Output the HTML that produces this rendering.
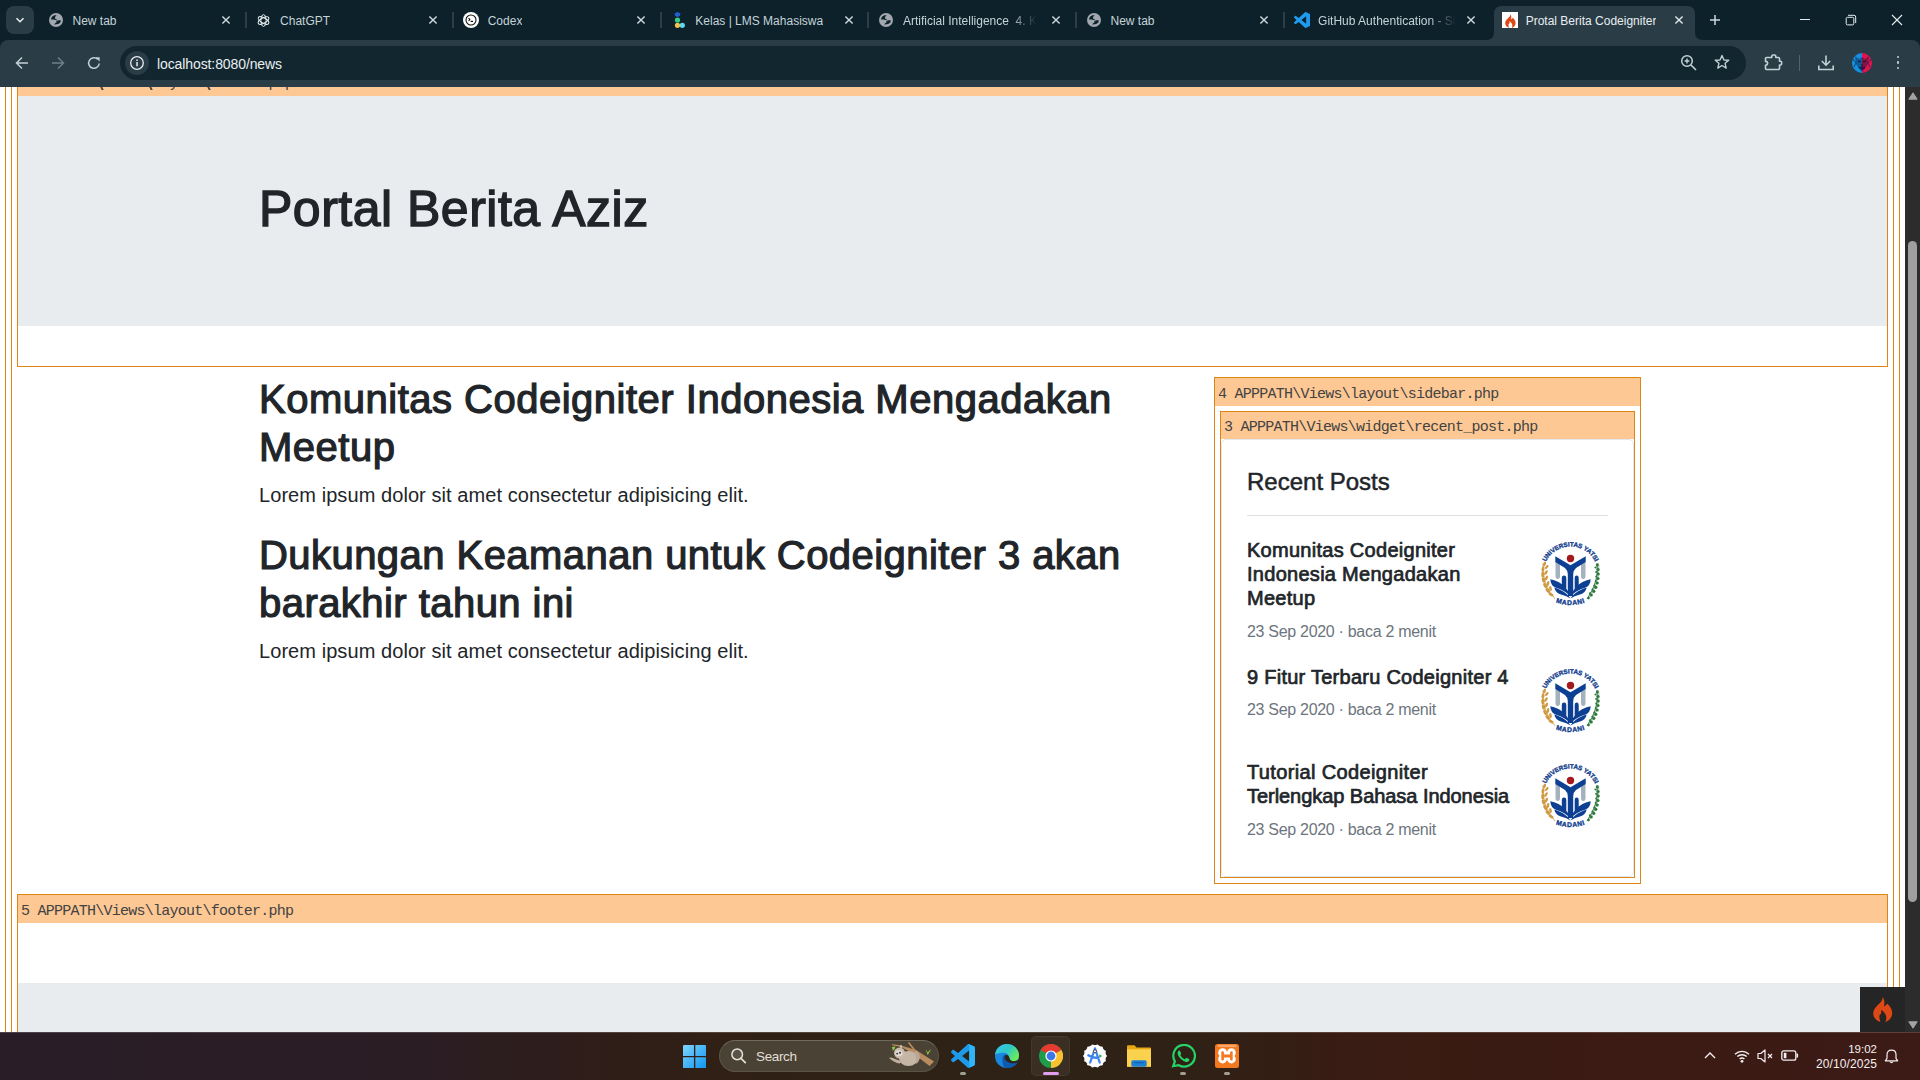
<!DOCTYPE html>
<html><head><meta charset="utf-8">
<style>
*{box-sizing:border-box;margin:0;padding:0}
html,body{width:1920px;height:1080px;overflow:hidden;background:#0c212a;font-family:"Liberation Sans",sans-serif}
.abs{position:absolute}
#tabstrip{position:absolute;left:0;top:0;width:1920px;height:40px;background:#0c212a}
#toolbar{position:absolute;left:0;top:40px;width:1920px;height:47px;background:#2a3c46;border-radius:8px 8px 0 0}
.tab{position:absolute;top:0;height:40px;width:208px}
.tab .ttl{position:absolute;top:13px;font-size:12.5px;color:#cfd8dc;white-space:nowrap;overflow:hidden}
.tab .cls{position:absolute;top:13px;width:14px;height:14px}
.sep{position:absolute;top:12px;width:1px;height:17px;background:#465761}
#page{position:absolute;left:0;top:87px;width:1905px;height:945px;background:#fff;overflow:hidden}
#sbar{position:absolute;left:1905px;top:87px;width:15px;height:945px;background:#2c2c2c}
#taskbar{position:absolute;left:0;top:1032px;width:1920px;height:48px;background:linear-gradient(90deg,#291d27 0%,#2b1d24 22%,#2f1e19 31%,#302015 37%,#2e2217 50%,#2f2116 62%,#391c13 70%,#3b1b14 85%,#3c1a16 100%)}
.vb{position:absolute;border:1px solid #dd8615}
.vp{position:absolute;background:#fdc894;color:#434343;font-family:"Liberation Mono",monospace;font-size:15px;letter-spacing:-0.75px;white-space:nowrap}
.h{color:#212529;position:absolute;white-space:nowrap}
.m{font-size:16px;line-height:20px;letter-spacing:-0.3px;color:#6c757d}
</style></head><body>

<div id="tabstrip">
<div class="abs" style="left:6px;top:6px;width:28px;height:28px;border-radius:8px;background:#2a3c46"></div>
<svg class="abs" style="left:14px;top:14px" width="12" height="12" viewBox="0 0 12 12"><path d="M2.5 4.2 L6 7.7 L9.5 4.2" stroke="#e6ecef" stroke-width="1.6" fill="none"/></svg>
<svg class="abs" style="left:1486px;top:6px" width="218" height="34" viewBox="0 0 218 34"><path d="M0 34 Q8 34 8 26 L8 8 Q8 0 16 0 L201 0 Q209 0 209 8 L209 26 Q209 34 217 34 Z" fill="#2a3c46"/></svg>
<svg class="abs" style="left:48.0px;top:12px" width="16" height="16" viewBox="0 0 16 16"><circle cx="8" cy="8" r="7" fill="#a0a7ae"/><path d="M3 7.4C3.2 6.2 3.6 5.4 4.1 4.7C4.7 4 5.3 3.6 6 3.4C6.9 3.1 7.8 3.1 8.7 3.2C8.1 3.6 7.5 4.1 7.3 4.7C7 5.2 6.8 5.6 6.9 5.8C7 6.2 7.1 6.5 7.3 6.7C7.8 7 8.1 7.1 8.4 7.3C8.8 7.6 9 8 9.1 8.4C8.3 8.1 7.5 7.9 6.7 7.8C6 7.7 5.4 7.6 4.7 7.6C4.1 7.5 3.5 7.5 3 7.4Z" fill="#0c212a"/><path d="M12.8 8.4C12.7 9.2 12.5 9.9 12.1 10.6C11.5 11.3 10.8 11.8 9.9 12.1C8.8 12.4 7.6 12.5 6.5 12.4C6.5 12.1 6.6 11.9 6.7 11.7C7.2 11.2 7.8 10.9 8.4 10.6C8.6 10.1 8.5 9.6 8.4 9.1C9 8.7 9.4 8.5 10 8.4C10.9 8.3 11.9 8.3 12.8 8.4Z" fill="#0c212a"/></svg>
<div class="abs" style="left:72.5px;top:13px;font-size:12px;line-height:16px;letter-spacing:0px;color:#c5d3d9;white-space:nowrap;overflow:hidden;">New tab</div>
<svg class="abs" style="left:219.75px;top:14px" width="12" height="12" viewBox="0 0 12 12"><path d="M2.4 2.4L9.6 9.6M9.6 2.4L2.4 9.6" stroke="#cfdade" stroke-width="1.4"/></svg>
<svg class="abs" style="left:256.1px;top:12.5px" width="15" height="15" viewBox="0 0 24 24"><g fill="none" stroke="#e8eef0" stroke-width="1.6"><ellipse cx="12" cy="12" rx="9.5" ry="4.2" transform="rotate(30 12 12)"/><ellipse cx="12" cy="12" rx="9.5" ry="4.2" transform="rotate(90 12 12)"/><ellipse cx="12" cy="12" rx="9.5" ry="4.2" transform="rotate(150 12 12)"/></g></svg>
<div class="abs" style="left:280.1px;top:13px;font-size:12px;line-height:16px;letter-spacing:0px;color:#c5d3d9;white-space:nowrap;overflow:hidden;">ChatGPT</div>
<svg class="abs" style="left:427.35px;top:14px" width="12" height="12" viewBox="0 0 12 12"><path d="M2.4 2.4L9.6 9.6M9.6 2.4L2.4 9.6" stroke="#cfdade" stroke-width="1.4"/></svg>
<svg class="abs" style="left:463.2px;top:12px" width="16" height="16" viewBox="0 0 16 16"><circle cx="8" cy="8" r="8" fill="#fff"/><circle cx="8" cy="8" r="5" fill="none" stroke="#111" stroke-width="1.1"/><path d="M5.6 6.2 L6.8 7.6 L5.6 9" stroke="#111" stroke-width="1.1" fill="none"/><path d="M7.6 9.4 H10" stroke="#111" stroke-width="1.2"/></svg>
<div class="abs" style="left:487.7px;top:13px;font-size:12px;line-height:16px;letter-spacing:0px;color:#c5d3d9;white-space:nowrap;overflow:hidden;">Codex</div>
<svg class="abs" style="left:634.95px;top:14px" width="12" height="12" viewBox="0 0 12 12"><path d="M2.4 2.4L9.6 9.6M9.6 2.4L2.4 9.6" stroke="#cfdade" stroke-width="1.4"/></svg>
<svg class="abs" style="left:672.8px;top:11px" width="14" height="18" viewBox="0 0 14 18"><path d="M1.5 2.5 L4.5 1 L7.5 2.5 L6.8 5 Q4.5 6.5 2.2 5 Z" fill="#1f5fd6"/><circle cx="4.5" cy="9" r="2.6" fill="#2fcf86"/><circle cx="4.5" cy="14.3" r="2.6" fill="#f7c04a"/><circle cx="9.3" cy="14.3" r="2.6" fill="#5fd8f0"/></svg>
<div class="abs" style="left:695.3px;top:13px;font-size:12px;line-height:16px;letter-spacing:0px;color:#c5d3d9;white-space:nowrap;overflow:hidden;">Kelas | LMS Mahasiswa</div>
<svg class="abs" style="left:842.55px;top:14px" width="12" height="12" viewBox="0 0 12 12"><path d="M2.4 2.4L9.6 9.6M9.6 2.4L2.4 9.6" stroke="#cfdade" stroke-width="1.4"/></svg>
<svg class="abs" style="left:878.4px;top:12px" width="16" height="16" viewBox="0 0 16 16"><circle cx="8" cy="8" r="7" fill="#a0a7ae"/><path d="M3 7.4C3.2 6.2 3.6 5.4 4.1 4.7C4.7 4 5.3 3.6 6 3.4C6.9 3.1 7.8 3.1 8.7 3.2C8.1 3.6 7.5 4.1 7.3 4.7C7 5.2 6.8 5.6 6.9 5.8C7 6.2 7.1 6.5 7.3 6.7C7.8 7 8.1 7.1 8.4 7.3C8.8 7.6 9 8 9.1 8.4C8.3 8.1 7.5 7.9 6.7 7.8C6 7.7 5.4 7.6 4.7 7.6C4.1 7.5 3.5 7.5 3 7.4Z" fill="#0c212a"/><path d="M12.8 8.4C12.7 9.2 12.5 9.9 12.1 10.6C11.5 11.3 10.8 11.8 9.9 12.1C8.8 12.4 7.6 12.5 6.5 12.4C6.5 12.1 6.6 11.9 6.7 11.7C7.2 11.2 7.8 10.9 8.4 10.6C8.6 10.1 8.5 9.6 8.4 9.1C9 8.7 9.4 8.5 10 8.4C10.9 8.3 11.9 8.3 12.8 8.4Z" fill="#0c212a"/></svg>
<div class="abs" style="left:902.9px;top:13px;font-size:12px;line-height:16px;letter-spacing:0px;color:#c5d3d9;white-space:nowrap;overflow:hidden;-webkit-mask-image:linear-gradient(90deg,#000 80%,transparent 100%);width:134px;">Artificial Intelligence&nbsp; 4. Knowledge</div>
<svg class="abs" style="left:1050.15px;top:14px" width="12" height="12" viewBox="0 0 12 12"><path d="M2.4 2.4L9.6 9.6M9.6 2.4L2.4 9.6" stroke="#cfdade" stroke-width="1.4"/></svg>
<svg class="abs" style="left:1086.0px;top:12px" width="16" height="16" viewBox="0 0 16 16"><circle cx="8" cy="8" r="7" fill="#a0a7ae"/><path d="M3 7.4C3.2 6.2 3.6 5.4 4.1 4.7C4.7 4 5.3 3.6 6 3.4C6.9 3.1 7.8 3.1 8.7 3.2C8.1 3.6 7.5 4.1 7.3 4.7C7 5.2 6.8 5.6 6.9 5.8C7 6.2 7.1 6.5 7.3 6.7C7.8 7 8.1 7.1 8.4 7.3C8.8 7.6 9 8 9.1 8.4C8.3 8.1 7.5 7.9 6.7 7.8C6 7.7 5.4 7.6 4.7 7.6C4.1 7.5 3.5 7.5 3 7.4Z" fill="#0c212a"/><path d="M12.8 8.4C12.7 9.2 12.5 9.9 12.1 10.6C11.5 11.3 10.8 11.8 9.9 12.1C8.8 12.4 7.6 12.5 6.5 12.4C6.5 12.1 6.6 11.9 6.7 11.7C7.2 11.2 7.8 10.9 8.4 10.6C8.6 10.1 8.5 9.6 8.4 9.1C9 8.7 9.4 8.5 10 8.4C10.9 8.3 11.9 8.3 12.8 8.4Z" fill="#0c212a"/></svg>
<div class="abs" style="left:1110.5px;top:13px;font-size:12px;line-height:16px;letter-spacing:0px;color:#c5d3d9;white-space:nowrap;overflow:hidden;">New tab</div>
<svg class="abs" style="left:1257.75px;top:14px" width="12" height="12" viewBox="0 0 12 12"><path d="M2.4 2.4L9.6 9.6M9.6 2.4L2.4 9.6" stroke="#cfdade" stroke-width="1.4"/></svg>
<svg class="abs" style="left:1293.6px;top:12px" width="16" height="16" viewBox="0 0 100 100"><path d="M70.9 99.3C72.5 99.9 74.3 99.9 75.9 99.1L96.5 89.2C98.6 88.2 100 86 100 83.6V16.4C100 14 98.6 11.8 96.5 10.8L75.9 0.9C73.8-0.1 71.3 0.1 69.5 1.4C69.3 1.6 69 1.8 68.8 2.1L29.4 38L12.2 25C10.6 23.8 8.4 23.9 6.9 25.2L1.4 30.3C-0.5 31.9-0.5 34.8 1.4 36.4L16.2 50L1.4 63.6C-0.5 65.2-0.5 68.1 1.4 69.7L6.9 74.8C8.4 76.1 10.6 76.2 12.2 75L29.4 62L68.8 97.9C69.4 98.5 70.1 99 70.9 99.3ZM75.9 27.3L46 50L75.9 72.7V27.3Z" fill="#1f9cf0" fill-rule="evenodd"/></svg>
<div class="abs" style="left:1318.1px;top:13px;font-size:12px;line-height:16px;letter-spacing:0px;color:#c5d3d9;white-space:nowrap;overflow:hidden;-webkit-mask-image:linear-gradient(90deg,#000 80%,transparent 100%);width:138px;">GitHub Authentication - Sign in</div>
<svg class="abs" style="left:1465.35px;top:14px" width="12" height="12" viewBox="0 0 12 12"><path d="M2.4 2.4L9.6 9.6M9.6 2.4L2.4 9.6" stroke="#cfdade" stroke-width="1.4"/></svg>
<div class="abs" style="left:1502px;top:12px;width:16px;height:16px;background:#fff"></div>
<svg class="abs" style="left:1504.5px;top:13.5px" width="11" height="14" viewBox="0 0 20 25"><path d="M9.6 0 C12 3.2 11.6 6.5 10.9 9.3 C12.4 8.9 13.5 7.9 14 6.4 C17.8 9.6 19.4 13 19.2 16.4 C19 20.6 16.2 23.6 12.3 25 C13.4 22.8 13.6 20.4 12.9 18.4 C12.2 16.3 10.4 14.7 8.6 12.8 C8.2 14.2 8 15.4 8.3 16.6 C7.6 17.2 6.6 17.6 6.4 18.8 C6.2 20.3 6.5 22.4 7.4 24.9 C2.8 23.6 0.2 20.3 0.3 16.2 C0.4 11.5 4.6 8.4 7.2 5.8 C8.7 4.2 9.6 2.4 9.6 0 Z" fill="#dd4814"/></svg>
<div class="abs" style="left:1525.7px;top:13px;font-size:12px;line-height:16px;letter-spacing:0px;color:#e8eef1;white-space:nowrap;overflow:hidden;">Protal Berita Codeigniter</div>
<svg class="abs" style="left:1672.95px;top:14px" width="12" height="12" viewBox="0 0 12 12"><path d="M2.4 2.4L9.6 9.6M9.6 2.4L2.4 9.6" stroke="#dfe7ea" stroke-width="1.4"/></svg>
<div class="abs" style="left:244.5px;top:12px;width:2px;height:16px;background:#2d3e47"></div>
<div class="abs" style="left:452.1px;top:12px;width:2px;height:16px;background:#2d3e47"></div>
<div class="abs" style="left:659.7px;top:12px;width:2px;height:16px;background:#2d3e47"></div>
<div class="abs" style="left:867.3px;top:12px;width:2px;height:16px;background:#2d3e47"></div>
<div class="abs" style="left:1074.9px;top:12px;width:2px;height:16px;background:#2d3e47"></div>
<div class="abs" style="left:1282.5px;top:12px;width:2px;height:16px;background:#2d3e47"></div>
<svg class="abs" style="left:1709px;top:14px" width="12" height="12" viewBox="0 0 12 12"><path d="M6 1V11M1 6H11" stroke="#cbd8de" stroke-width="1.5"/></svg>
<div class="abs" style="left:1800px;top:19px;width:10px;height:1px;background:#e8eef0"></div>
<svg class="abs" style="left:1845px;top:14px" width="12" height="12" viewBox="0 0 12 12"><rect x="1.2" y="3.3" width="7.6" height="7.6" rx="1.3" fill="none" stroke="#e8eef0" stroke-width="1"/><path d="M3 1.3H9Q10.7 1.3 10.7 3V9" fill="none" stroke="#e8eef0" stroke-width="1"/></svg>
<svg class="abs" style="left:1891px;top:14px" width="12" height="12" viewBox="0 0 12 12"><path d="M1 1L11 11M11 1L1 11" stroke="#e8eef0" stroke-width="1.1"/></svg>
</div>
<div id="toolbar">
<svg class="abs" style="left:14px;top:15px" width="16" height="16" viewBox="0 0 16 16"><path d="M14 8H3M8 2.5L2.5 8L8 13.5" stroke="#c3d0d6" stroke-width="1.5" fill="none"/></svg>
<svg class="abs" style="left:50px;top:15px" width="16" height="16" viewBox="0 0 16 16"><path d="M2 8H13M8 2.5L13.5 8L8 13.5" stroke="#6d7f88" stroke-width="1.5" fill="none"/></svg>
<svg class="abs" style="left:86px;top:15px" width="16" height="16" viewBox="0 0 16 16"><path d="M13.2 8.5A5.3 5.3 0 1 1 11.6 4.2" stroke="#c3d0d6" stroke-width="1.5" fill="none"/><path d="M9.3 2.2H13.6V6.5Z" fill="#c3d0d6"/></svg>
<div class="abs" style="left:120px;top:6px;width:1626px;height:34px;border-radius:17px;background:#12262f"></div>
<div class="abs" style="left:125px;top:11px;width:24px;height:24px;border-radius:12px;background:#2a3c46"></div>
<svg class="abs" style="left:129px;top:15px" width="16" height="16" viewBox="0 0 16 16"><circle cx="8" cy="8" r="6.3" fill="none" stroke="#e6edf0" stroke-width="1.3"/><rect x="7.3" y="7" width="1.5" height="4.3" fill="#e6edf0"/><rect x="7.3" y="4.5" width="1.5" height="1.5" fill="#e6edf0"/></svg>
<div class="abs" style="left:157px;top:14.5px;font-size:14px;line-height:18px;color:#e9eef0;white-space:nowrap;letter-spacing:-0.1px">localhost:8080/news</div>
<svg class="abs" style="left:1680px;top:14px" width="18" height="18" viewBox="0 0 18 18"><circle cx="7" cy="7" r="5.3" fill="none" stroke="#c3d0d6" stroke-width="1.5"/><path d="M11 11L16 16" stroke="#c3d0d6" stroke-width="1.6"/><path d="M7 4.6V9.4M4.6 7H9.4" stroke="#c3d0d6" stroke-width="1.4"/></svg>
<svg class="abs" style="left:1713px;top:13px" width="18" height="18" viewBox="0 0 24 24"><path d="M12 3.2L14.6 9.3L21 9.7L16.1 13.8L17.6 20.2L12 16.7L6.4 20.2L7.9 13.8L3 9.7L9.4 9.3Z" fill="none" stroke="#c3d0d6" stroke-width="1.8" stroke-linejoin="round"/></svg>
<svg class="abs" style="left:1762px;top:12px" width="22" height="22" viewBox="0 0 22 22"><path d="M4.5 5.5 H9.8 V4.2 Q9.8 3 11 3 H12.6 Q13.8 3 13.8 4.2 V5.5 H16.5 Q17.5 5.5 17.5 6.5 V9.3 H18.6 Q19.6 9.3 19.6 10.3 V12 Q19.6 13 18.6 13 H17.5 V16.5 Q17.5 17.5 16.5 17.5 H4.5 Q3.5 17.5 3.5 16.5 V13.2 Q5.6 13 5.6 11.3 Q5.6 9.6 3.5 9.4 V6.5 Q3.5 5.5 4.5 5.5 Z" fill="none" stroke="#c3d0d6" stroke-width="1.6" stroke-linejoin="round"/></svg>
<div class="abs" style="left:1798.5px;top:15px;width:1.5px;height:16px;background:#52636c"></div>
<svg class="abs" style="left:1817px;top:14px" width="18" height="18" viewBox="0 0 18 18"><path d="M9 1.5V11M4.8 7L9 11.2L13.2 7" stroke="#c3d0d6" stroke-width="1.6" fill="none"/><path d="M1.8 11.5V15.5H16.2V11.5" stroke="#c3d0d6" stroke-width="1.6" fill="none"/></svg>
<svg class="abs" style="left:1852px;top:12.5px" width="20" height="20" viewBox="0 0 20 20"><defs><clipPath id="av"><circle cx="10" cy="10" r="10"/></clipPath></defs><g clip-path="url(#av)"><rect x="0" y="0" width="10.5" height="20" fill="#1590e0"/><rect x="10" y="0" width="10" height="20" fill="#e01450"/><path d="M3 3 L7 6 L10 4 L13 6 L17 3 L16 11 L12 17 L10 19 L8 17 L4 11Z" fill="#12163a" opacity="0.45"/><path d="M6 8 L9 9 M14 8 L11 9 M10 11 V15 M7 14 L10 16 L13 14" stroke="#0b0f2a" stroke-width="1.1" fill="none" opacity="0.8"/><path d="M1 6 L4 10 L2 14 M19 6 L16 10 L18 14" stroke="#0a1640" stroke-width="1" fill="none" opacity="0.6"/></g></svg>
<div class="abs" style="left:1896.7px;top:15.6px;width:2.8px;height:2.8px;border-radius:2px;background:#c3d0d6"></div>
<div class="abs" style="left:1896.7px;top:21.1px;width:2.8px;height:2.8px;border-radius:2px;background:#c3d0d6"></div>
<div class="abs" style="left:1896.7px;top:26.6px;width:2.8px;height:2.8px;border-radius:2px;background:#c3d0d6"></div>
</div>

<svg width="0" height="0" style="position:absolute"><defs>
<path id="arcT" d="M5 33 A27.5 27.5 0 0 1 60 33"/>
<path id="arcB" d="M15 60.5 Q32.5 67.5 50 60.5"/>
</defs>
<symbol id="uym" viewBox="0 0 63 67">
<text font-family="Liberation Sans" font-weight="700" font-size="6.3" fill="#143f8f" stroke="#143f8f" stroke-width="0.35" letter-spacing="0"><textPath href="#arcT" startOffset="50%" text-anchor="middle">UNIVERSITAS YATSI</textPath></text>
<text font-family="Liberation Sans" font-weight="700" font-size="6.8" fill="#143f8f" stroke="#143f8f" stroke-width="0.35" letter-spacing="0.5"><textPath href="#arcB" startOffset="50%" text-anchor="middle">MADANI</textPath></text>
<!-- wheat left -->
<g fill="#d09a45">
<ellipse cx="6.5" cy="23" rx="1.3" ry="2.6" transform="rotate(20 6.5 23)"/>
<ellipse cx="5" cy="28" rx="1.5" ry="2.8" transform="rotate(10 5 28)"/>
<ellipse cx="4.8" cy="33.5" rx="1.6" ry="2.9" transform="rotate(0 4.8 33.5)"/>
<ellipse cx="5.5" cy="39" rx="1.6" ry="2.9" transform="rotate(-15 5.5 39)"/>
<ellipse cx="7.2" cy="44.5" rx="1.6" ry="2.9" transform="rotate(-30 7.2 44.5)"/>
<ellipse cx="9.8" cy="49.5" rx="1.6" ry="2.9" transform="rotate(-45 9.8 49.5)"/>
<ellipse cx="13" cy="53.5" rx="1.5" ry="2.8" transform="rotate(-60 13 53.5)"/>
<ellipse cx="8.8" cy="26" rx="1.2" ry="2.4" transform="rotate(40 8.8 26)"/>
<ellipse cx="8" cy="31.5" rx="1.3" ry="2.6" transform="rotate(35 8 31.5)"/>
<ellipse cx="8.5" cy="37" rx="1.3" ry="2.6" transform="rotate(25 8.5 37)"/>
<ellipse cx="10" cy="42.5" rx="1.3" ry="2.6" transform="rotate(10 10 42.5)"/>
<ellipse cx="12.5" cy="47.5" rx="1.3" ry="2.6" transform="rotate(-10 12.5 47.5)"/>
<path d="M5 22 Q3.5 42 17 58" stroke="#d09a45" stroke-width="0.8" fill="none"/>
</g>
<!-- leaves right -->
<g fill="#2a7a3c">
<path d="M59 22 Q61.5 40 49 58" stroke="#c9d3cc" stroke-width="2.2" fill="none" transform="translate(1 0)"/>
<path d="M59 22 Q61.5 40 49 58" stroke="#2a7a3c" stroke-width="0.9" fill="none"/>
<circle cx="59.3" cy="24" r="1.5"/><circle cx="60" cy="28.5" r="1.6"/><circle cx="60.2" cy="33" r="1.6"/><circle cx="60" cy="37.5" r="1.6"/><circle cx="59.2" cy="42" r="1.6"/><circle cx="57.8" cy="46.3" r="1.6"/><circle cx="55.8" cy="50.3" r="1.6"/><circle cx="53.3" cy="54" r="1.5"/><circle cx="50.5" cy="57" r="1.3"/>
<circle cx="57.5" cy="26.5" r="1.1"/><circle cx="58.2" cy="31" r="1.1"/><circle cx="58.3" cy="35.5" r="1.1"/><circle cx="57.8" cy="40" r="1.1"/><circle cx="56.5" cy="44.5" r="1.1"/><circle cx="54.5" cy="48.5" r="1.1"/><circle cx="52" cy="52.3" r="1.1"/>
</g>
<!-- red dot -->
<circle cx="32.5" cy="17.5" r="3.7" fill="#a3191c"/>
<!-- gray bars -->
<path d="M17.5 21 H22 V35 Q22 38 19.8 38 Q17.5 38 17.5 35Z" fill="#a3b2be"/>
<path d="M43 21 H47.5 V35 Q47.5 38 45.2 38 Q43 38 43 35Z" fill="#a3b2be"/>
<!-- Y -->
<path d="M17.3 15.3 L32.5 24.2 L47.7 15.3 V21 L38 27 Q35.2 29.5 35.2 33 V55 H29.8 V33 Q29.8 29.5 27 27 L17.3 21Z" fill="#0d3f93"/>
<!-- small bars -->
<path d="M23.8 37 Q23.8 34.6 26 34.6 Q28.3 34.6 28.3 37 V47.5 H23.8Z" fill="#0d3f93"/>
<path d="M36.7 37 Q36.7 34.6 38.7 34.6 Q40.7 34.6 40.7 37 V47.5 H36.7Z" fill="#0d3f93"/>
<!-- leaves -->
<path d="M12.3 38.2 Q12.5 44.5 18 46.8 Q27 49.5 32.5 55.5 Q29 45.5 20.5 41 Q16 38.6 12.3 38.2Z" fill="#0d3f93"/>
<path d="M52.7 38.2 Q52.5 44.5 47 46.8 Q38 49.5 32.5 55.5 Q36 45.5 44.5 41 Q49 38.6 52.7 38.2Z" fill="#0d3f93"/>
<path d="M16.3 46.5 Q17.5 52 23 53.5 Q29 54.8 32.5 57.5 Q28.5 51.5 22.5 49 Q19 47.2 16.3 46.5Z" fill="#0d3f93"/>
<path d="M48.7 46.5 Q47.5 52 42 53.5 Q36 54.8 32.5 57.5 Q36.5 51.5 42.5 49 Q46 47.2 48.7 46.5Z" fill="#0d3f93"/>
</symbol>
</svg>
<div id="page">
  <!-- level 1 & 2 boxes -->
  <div class="vb" style="left:5px;top:-200px;width:1895px;height:2000px"></div>
  <div class="vb" style="left:11px;top:-200px;width:1883px;height:2000px"></div>
  <!-- header box level 3 -->
  <div class="vb" style="left:17px;top:-200px;width:1871px;height:480px"></div>
  <div class="vp" style="left:18px;top:-200px;width:1869px;height:209px"></div>
  <div class="vp" style="left:21px;top:-13px;height:20px;background:transparent;line-height:20px">2 APPPATH\Views\layout\header.php</div>
<div class="abs" style="left:101px;top:0;width:1.6px;height:3px;background:#434343;transform:skewX(25deg)"></div><div class="abs" style="left:150px;top:0;width:1.6px;height:3px;background:#434343;transform:skewX(25deg)"></div><div class="abs" style="left:208px;top:0;width:1.6px;height:3px;background:#434343;transform:skewX(25deg)"></div>
  <div class="abs" style="left:18px;top:9px;width:1869px;height:230px;background:#e9ecef"></div>
  <div class="h" id="title" style="left:259px;top:92px;letter-spacing:0.5px;font-size:50px;line-height:60px;-webkit-text-stroke:1.4px #212529">Portal Berita Aziz</div>

  <!-- articles -->
  <div class="h" id="a1" style="left:259px;top:287.5px;letter-spacing:0.5px;font-size:40px;line-height:48px;-webkit-text-stroke:1.2px #212529">Komunitas Codeigniter Indonesia Mengadakan<br>Meetup</div>
  <div class="h" id="p1" style="left:259px;top:392.5px;letter-spacing:0.07px;font-size:20px;line-height:30px">Lorem ipsum dolor sit amet consectetur adipisicing elit.</div>
  <div class="h" id="a2" style="left:259px;top:443.5px;letter-spacing:0.45px;font-size:40px;line-height:48px;-webkit-text-stroke:1.2px #212529">Dukungan Keamanan untuk Codeigniter 3 akan<br>barakhir tahun ini</div>
  <div class="h" id="p2" style="left:259px;top:548.5px;letter-spacing:0.07px;font-size:20px;line-height:30px">Lorem ipsum dolor sit amet consectetur adipisicing elit.</div>

  <!-- sidebar -->
  <div class="vb" style="left:1214px;top:290px;width:427px;height:507px"></div>
  <div class="vp" style="left:1215px;top:291px;width:425px;height:28px;line-height:33px;padding-left:3px">4 APPPATH\Views\layout\sidebar.php</div>
  <div class="vb" style="left:1220px;top:324px;width:415px;height:467px"></div>
  <div class="vp" style="left:1221px;top:325px;width:413px;height:27px;line-height:32px;padding-left:3px">3 APPPATH\Views\widget\recent_post.php</div>
  <div class="abs" style="left:1221px;top:352px;width:413px;height:438px;border:1px solid #e2e7ec;border-radius:5px"></div>
  <div class="h" id="rp" style="left:1247px;top:380px;font-size:24px;line-height:30px;-webkit-text-stroke:0.5px #212529">Recent Posts</div>
  <div class="abs" style="left:1247px;top:428px;width:361px;height:1px;background:#dfe2e5"></div>

  <div class="h" id="s1" style="left:1247px;top:451px;letter-spacing:0.28px;font-size:20px;line-height:24px;-webkit-text-stroke:0.7px #212529">Komunitas Codeigniter<br>Indonesia Mengadakan<br>Meetup</div>
  <div class="h m" style="left:1247px;top:534.5px">23 Sep 2020 · baca 2 menit</div>
  <div class="h" id="s2" style="left:1247px;top:578px;letter-spacing:0.26px;font-size:20px;line-height:24px;-webkit-text-stroke:0.7px #212529">9 Fitur Terbaru Codeigniter 4</div>
  <div class="h m" style="left:1247px;top:613px">23 Sep 2020 · baca 2 menit</div>
  <div class="h" id="s3" style="left:1247px;top:673px;font-size:20px;line-height:24px;-webkit-text-stroke:0.7px #212529"><span style="letter-spacing:0.36px">Tutorial Codeigniter</span><br><span style="letter-spacing:-0.05px">Terlengkap Bahasa Indonesia</span></div>
  <div class="h m" style="left:1247px;top:732.5px">23 Sep 2020 · baca 2 menit</div>

  <svg class="abs" style="left:1538px;top:454px" width="63" height="67"><use href="#uym"/></svg>
  <svg class="abs" style="left:1538px;top:581.2px" width="63" height="67"><use href="#uym"/></svg>
  <svg class="abs" style="left:1538px;top:676.4px" width="63" height="67"><use href="#uym"/></svg>
  <!-- footer -->
  <div class="vb" style="left:17px;top:807px;width:1871px;height:400px"></div>
  <div class="vp" style="left:18px;top:808px;width:1869px;height:28px;line-height:33px;padding-left:3px">5 APPPATH\Views\layout\footer.php</div>
  <div class="abs" style="left:18px;top:896px;width:1869px;height:100px;background:#e9ecef"></div>

  <!-- CI debug icon -->
  <div class="abs" style="left:1860px;top:900px;width:45px;height:45px;background:#252525"></div>
  <svg class="abs" style="left:1873px;top:910px" width="20" height="25" viewBox="0 0 20 25"><path d="M9.6 0 C12 3.2 11.6 6.5 10.9 9.3 C12.4 8.9 13.5 7.9 14 6.4 C17.8 9.6 19.4 13 19.2 16.4 C19 20.6 16.2 23.6 12.3 25 C13.4 22.8 13.6 20.4 12.9 18.4 C12.2 16.3 10.4 14.7 8.6 12.8 C8.2 14.2 8 15.4 8.3 16.6 C7.6 17.2 6.6 17.6 6.4 18.8 C6.2 20.3 6.5 22.4 7.4 24.9 C2.8 23.6 0.2 20.3 0.3 16.2 C0.4 11.5 4.6 8.4 7.2 5.8 C8.7 4.2 9.6 2.4 9.6 0 Z" fill="#dd4814"/></svg>
</div>
<div id="sbar">
 <svg class="abs" style="left:2.5px;top:4.5px" width="10" height="8" viewBox="0 0 10 8"><path d="M5 0.8 L9.2 7.2 H0.8Z" fill="#a3a3a3" stroke="#a3a3a3" stroke-width="1" stroke-linejoin="round"/></svg>
 <div class="abs" style="left:3px;top:154px;width:9px;height:661px;border-radius:4.5px;background:#9f9f9f"></div>
 <svg class="abs" style="left:2.5px;top:933.5px" width="10" height="8" viewBox="0 0 10 8"><path d="M5 7.2 L9.2 0.8 H0.8Z" fill="#a3a3a3" stroke="#a3a3a3" stroke-width="1" stroke-linejoin="round"/></svg>
</div>
<div id="taskbar">
 <div class="abs" style="left:0;top:0;width:1920px;height:1px;background:rgba(255,255,255,0.16)"></div>
 <!-- windows logo -->
 <svg class="abs" style="left:683px;top:13px" width="23.3" height="23.3" viewBox="0 0 24 24"><defs><linearGradient id="wg" x1="0" y1="0" x2="1" y2="1"><stop offset="0" stop-color="#7fd6fb"/><stop offset="1" stop-color="#0f93f2"/></linearGradient></defs><path d="M0 1.2Q0 0 1.2 0H11.3V11.3H0Z M12.7 0H22.8Q24 0 24 1.2V11.3H12.7Z M0 12.7H11.3V24H1.2Q0 24 0 22.8Z M12.7 12.7H24V22.8Q24 24 22.8 24H12.7Z" fill="url(#wg)"/></svg>
 <!-- search pill -->
 <div class="abs" style="left:719px;top:8px;width:220px;height:32px;border-radius:16px;background:#4a4335;border:1px solid #5a5446;border-top-color:#706a5c"></div>
 <svg class="abs" style="left:730px;top:15px" width="18" height="18" viewBox="0 0 18 18"><circle cx="7.2" cy="7.4" r="5.3" fill="#5a5247" stroke="#e6e1d8" stroke-width="1.5"/><path d="M11 11.3L15.3 15.6" stroke="#e6e1d8" stroke-width="1.7" stroke-linecap="round"/></svg>
 <div class="abs" style="left:756px;top:15.5px;font-size:13.5px;line-height:18px;color:#e3ded6;letter-spacing:-0.35px">Search</div>
 <!-- sloth -->
 <svg class="abs" style="left:880px;top:6px" width="60" height="36" viewBox="0 0 60 36"><path d="M12 6.3 Q17 6.5 21 7.6 L36 12 L54 23.5 L49.5 28 L34 16 L21 9 Q16 7.8 12 7.3Z" fill="#b98c60"/><path d="M29 5 L34.5 12" stroke="#b98c60" stroke-width="1.6" stroke-linecap="round"/><path d="M11.5 9.5 Q14 8 15.5 8.5 Q15 11.5 12.5 13 Q13.5 11 11.5 9.5Z" fill="#8fc63c"/><path d="M45.5 11.5 Q47 14 47.5 17 Q50 14 51 11 Q49 12.5 47.8 14.5 Q47 12.5 45.5 11.5Z" fill="#8fc63c"/><ellipse cx="28.5" cy="20.5" rx="9.5" ry="7.5" fill="#c5b5a5"/><path d="M36 12.5 Q40 15 40 20 Q39 24 36 26 Q37 20 34.5 15Z" fill="#b9a796"/><path d="M9 20 Q12 23 17 25 Q21 26.5 22 23 Q18 22 14 20.5 Q11 19 9 20Z" fill="#bfae9d"/><circle cx="19.5" cy="15" r="5.5" fill="#c9bbad"/><ellipse cx="18.8" cy="15.2" rx="3.6" ry="3" fill="#e3dad2"/><ellipse cx="17.2" cy="15.6" rx="1.1" ry="0.9" fill="#3a3c52"/><ellipse cx="20" cy="14.7" rx="1.1" ry="1" fill="#3a3c52"/><path d="M21 7 V10" stroke="#e9e2da" stroke-width="1.2"/></svg>
 <!-- vscode -->
 <svg class="abs" style="left:951px;top:12px" width="24" height="24" viewBox="0 0 100 100"><path d="M70.9 99.3C72.5 99.9 74.3 99.9 75.9 99.1L96.5 89.2C98.6 88.2 100 86 100 83.6V16.4C100 14 98.6 11.8 96.5 10.8L75.9 0.9C73.8-0.1 71.3 0.1 69.5 1.4C69.3 1.6 69 1.8 68.8 2.1L29.4 38L12.2 25C10.6 23.8 8.4 23.9 6.9 25.2L1.4 30.3C-0.5 31.9-0.5 34.8 1.4 36.4L16.2 50L1.4 63.6C-0.5 65.2-0.5 68.1 1.4 69.7L6.9 74.8C8.4 76.1 10.6 76.2 12.2 75L29.4 62L68.8 97.9C69.4 98.5 70.1 99 70.9 99.3ZM75.9 27.3L46 50L75.9 72.7V27.3Z" fill="#1f9ae8" fill-rule="evenodd"/><path d="M69.5 1.4C71.3 0.1 73.8-0.1 75.9 0.9L96.5 10.8C98.6 11.8 100 14 100 16.4V83.6C100 86 98.6 88.2 96.5 89.2L75.9 99.1C74.3 99.9 72.5 99.9 70.9 99.3C72.6 99.6 75 98.5 75.9 96.5V3.5C75 1.5 72 0.8 69.5 1.4Z" fill="#2fb5f8"/></svg>
 <div class="abs" style="left:960px;top:40px;width:6px;height:3px;border-radius:2px;background:#a29d95"></div>
 <!-- edge -->
 <svg class="abs" style="left:995px;top:12px" width="24" height="24" viewBox="0 0 24 24"><defs><linearGradient id="eg1" x1="0" y1="0" x2="1" y2="0.6"><stop offset="0" stop-color="#38c6f6"/><stop offset="0.55" stop-color="#2ec8c4"/><stop offset="1" stop-color="#6cec58"/></linearGradient></defs><circle cx="12" cy="12" r="12" fill="#1a87de"/><path d="M0.1 10.5 C0.8 4.5 5.8 0 12 0 C18.8 0 24 5.2 24 11.5 C24 15 21.8 17.2 18.8 17.2 C16.2 17.2 14.5 15.8 14.2 13.5 C13.8 10.8 11.5 8.8 8.8 8.8 C5.5 8.8 2.2 9.3 0.1 10.5 Z" fill="url(#eg1)"/><path d="M7.5 13.5 C7.8 10.8 10.5 9.8 12.5 10.8 C13.5 11.5 13.8 12.8 14 13.8 C14.5 16.3 16.5 18.2 19.2 18.4 C20.5 18.5 21.8 18.3 22.6 18 C20.8 21.7 16.8 24 12 24 C9.5 24 8.3 22.5 7.9 20.5 C7.5 18.2 7.3 15.5 7.5 13.5 Z" fill="#0e5aae"/><path d="M9.6 13.8 C9.6 11.8 11 10.8 12.3 11.2 C13.5 11.6 14 12.5 14.2 13.5 C14.5 15.8 16.2 17.2 18.8 17.2 C21 17.2 22.8 16.5 23.6 15.5 C23.2 16.8 22.8 17.5 22.4 18.2 C21.5 19 20.5 19.3 19 19.3 C16 19.3 13 18.5 11.5 17 C10.3 16 9.6 15 9.6 13.8 Z" fill="#2e2317"/></svg>
 <!-- chrome highlight -->
 <div class="abs" style="left:1031px;top:4px;width:39px;height:40px;border-radius:5px;background:rgba(255,255,255,0.06);border:1px solid rgba(255,255,255,0.05)"></div>
 <svg class="abs" style="left:1039px;top:12px" width="24" height="24" viewBox="0 0 24 24"><circle cx="12" cy="12" r="12" fill="#1e9c4a"/><path d="M12 12 L1.6 6 A12 12 0 0 1 22.4 6 Z" fill="#e53b30"/><path d="M12 12 L22.4 6 A12 12 0 0 1 12 24 Z" fill="#fbc02d"/><circle cx="12" cy="12" r="5.6" fill="#fff"/><circle cx="12" cy="12" r="4.4" fill="#3b78e7"/></svg>
 <div class="abs" style="left:1043px;top:40px;width:16px;height:3px;border-radius:2px;background:#e39ef0"></div>
 <!-- android studio -->
 <svg class="abs" style="left:1083px;top:12px" width="24" height="24" viewBox="0 0 24 24"><g fill="#fdfdfd"><circle cx="12" cy="12" r="11"/><circle cx="22.60" cy="12.00" r="1.25"/><circle cx="21.55" cy="16.60" r="1.25"/><circle cx="18.61" cy="20.29" r="1.25"/><circle cx="14.36" cy="22.33" r="1.25"/><circle cx="9.64" cy="22.33" r="1.25"/><circle cx="5.39" cy="20.29" r="1.25"/><circle cx="2.45" cy="16.60" r="1.25"/><circle cx="1.40" cy="12.00" r="1.25"/><circle cx="2.45" cy="7.40" r="1.25"/><circle cx="5.39" cy="3.71" r="1.25"/><circle cx="9.64" cy="1.67" r="1.25"/><circle cx="14.36" cy="1.67" r="1.25"/><circle cx="18.61" cy="3.71" r="1.25"/><circle cx="21.55" cy="7.40" r="1.25"/></g><path d="M12 4.5 L7.2 18.5 M12 4.5 L16.7 18.5 M5.3 11.3 Q10 14.5 15.5 13.5" stroke="#3f84ec" stroke-width="2.3" fill="none" stroke-linecap="round"/><circle cx="12" cy="7.3" r="1.5" fill="#fff" stroke="#2b2b2b" stroke-width="0.8"/><path d="M16.3 10.3 L19.2 12 L16.3 13.7Z" fill="#2fa84f"/></svg>
 <!-- file explorer -->
 <svg class="abs" style="left:1127px;top:12.5px" width="24" height="23" viewBox="0 0 24 23"><path d="M0 1.2 Q0 0.3 1 0.3 H7.5 L9.5 2.6 H23 Q24 2.6 24 3.6 V21.7 H0Z" fill="#e8a612"/><path d="M0 4.3 H24 V21.7 H0Z" fill="#fbd24e"/><rect x="4.3" y="15.3" width="15.4" height="6.4" rx="1.6" fill="#1b80d6"/><rect x="7.5" y="17.2" width="9" height="1" fill="#0f5ea8"/></svg>
 <!-- whatsapp -->
 <svg class="abs" style="left:1169.5px;top:12px" width="26.5" height="26.5" viewBox="0.6 0.8 24 24"><path d="M3.5 20.8 L5 16.5 A9.8 9.8 0 1 1 8.6 20 Z" fill="none" stroke="#25d366" stroke-width="2"/><path d="M8.2 6.8 Q9.3 6.3 9.8 7.3 L10.6 9.2 Q10.8 9.9 10.2 10.5 Q9.9 10.9 10.3 11.5 Q11.6 13.5 13.5 14.4 Q14.1 14.7 14.5 14.2 L15.2 13.5 Q15.7 13 16.3 13.4 L17.8 14.3 Q18.4 14.8 18 15.7 Q17 17.5 15 17 Q10.5 15.8 8 11.3 Q6.8 8.5 8.2 6.8Z" fill="#25d366"/></svg>
 <div class="abs" style="left:1180px;top:40px;width:6px;height:3px;border-radius:2px;background:#a29d95"></div>
 <!-- xampp -->
 <svg class="abs" style="left:1215px;top:12px" width="24" height="24" viewBox="0 0 24 24"><rect x="0" y="0" width="24" height="24" rx="2.5" fill="#f3791f"/><rect x="2.5" y="0.8" width="19" height="2.2" rx="1.1" fill="#fbb684" opacity="0.75"/><g fill="#fff"><circle cx="7.6" cy="8.7" r="4.4"/><circle cx="16.4" cy="8.7" r="4.4"/><circle cx="7.6" cy="15" r="4.4"/><circle cx="16.4" cy="15" r="4.4"/><rect x="7.6" y="7.9" width="8.8" height="8"/></g><g fill="#f3791f"><rect x="6.3" y="7.2" width="2.6" height="9.3" rx="1.3"/><rect x="15.1" y="7.2" width="2.6" height="9.3" rx="1.3"/><rect x="7.5" y="10.5" width="9" height="3"/></g></svg>
 <div class="abs" style="left:1224px;top:40px;width:6px;height:3px;border-radius:2px;background:#a29d95"></div>
 <!-- tray -->
 <svg class="abs" style="left:1704px;top:19px" width="12" height="8" viewBox="0 0 12 8"><path d="M1 7L6 2L11 7" stroke="#f2eeee" stroke-width="1.4" fill="none"/></svg>
 <svg class="abs" style="left:1734px;top:17px" width="16" height="14" viewBox="0 0 16 14"><path d="M1 5.2 A10 10 0 0 1 15 5.2 M3.3 7.6 A6.8 6.8 0 0 1 12.7 7.6 M5.6 10 A3.6 3.6 0 0 1 10.4 10" stroke="#f4efef" stroke-width="1.4" fill="none"/><circle cx="8" cy="12.3" r="1.4" fill="#f4efef"/></svg>
 <svg class="abs" style="left:1757px;top:17px" width="17" height="14" viewBox="0 0 17 14"><path d="M1 4.5H3.8L8 1V13L3.8 9.5H1Z" stroke="#f4efef" stroke-width="1.2" fill="none" stroke-linejoin="round"/><path d="M11 5L15 9M15 5L11 9" stroke="#f4efef" stroke-width="1.2"/></svg>
 <svg class="abs" style="left:1781px;top:18px" width="18" height="11" viewBox="0 0 18 11"><rect x="0.8" y="0.8" width="14" height="9.4" rx="2" stroke="#f4efef" stroke-width="1.3" fill="none"/><rect x="2.8" y="2.8" width="2.6" height="5.4" fill="#f4efef"/><rect x="15.5" y="3.5" width="1.6" height="4" rx="0.6" fill="#f4efef"/></svg>
 <div class="abs" style="left:1800px;top:9px;width:77px;text-align:right;font-size:11.5px;line-height:16px;color:#f5f1f0">19:02</div>
 <div class="abs" style="left:1790px;top:24px;width:87px;text-align:right;font-size:12px;line-height:16px;color:#f5f1f0;letter-spacing:0.1px">20/10/2025</div>
 <svg class="abs" style="left:1884px;top:17px" width="15" height="15" viewBox="0 0 15 15"><path d="M7.5 1.2Q3 1.2 3 5.8V9.3L1.3 11.8H13.7L12 9.3V5.8Q12 1.2 7.5 1.2Z" stroke="#f4efef" stroke-width="1.2" fill="none" stroke-linejoin="round"/><path d="M5.8 12.5Q7.5 14.8 9.2 12.5" stroke="#f4efef" stroke-width="1.2" fill="none"/></svg>
</div>
</body></html>
